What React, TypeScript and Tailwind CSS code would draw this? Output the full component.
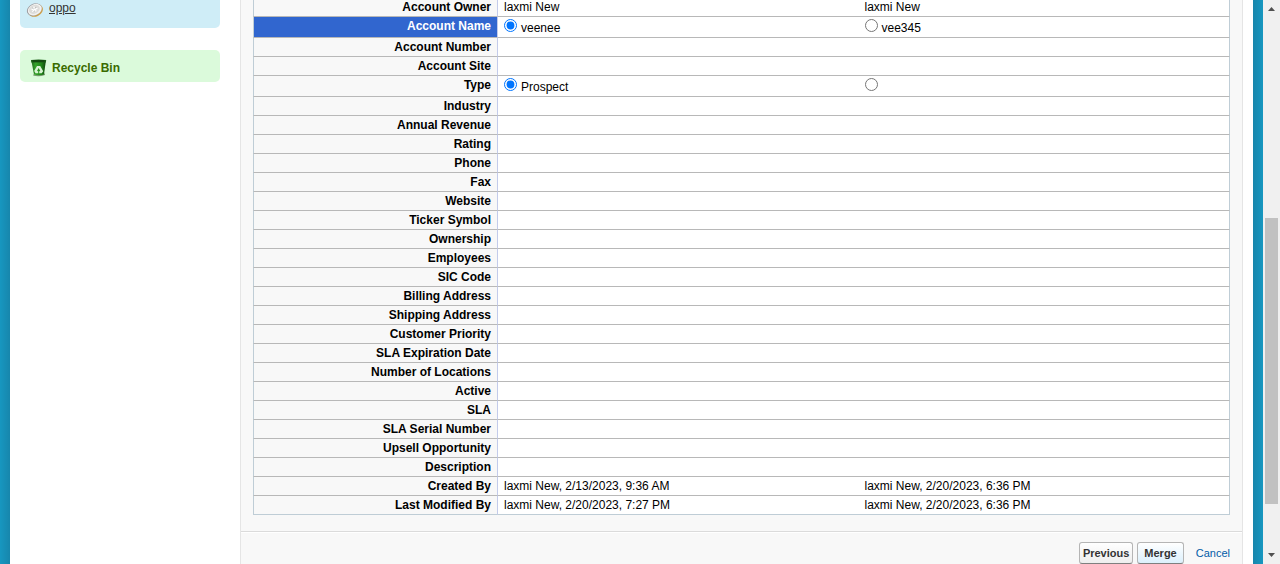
import React from 'react';

type Value = { text: string; choice?: boolean; checked?: boolean };
type Row = { label: string; values: [Value, Value]; active?: boolean };

const blank = (label: string): Row => ({ label, values: [{ text: '' }, { text: '' }] });

const rows: Row[] = [
  { label: 'Account Owner', values: [{ text: 'laxmi New' }, { text: 'laxmi New' }] },
  {
    label: 'Account Name',
    active: true,
    values: [
      { text: 'veenee', choice: true, checked: true },
      { text: 'vee345', choice: true },
    ],
  },
  blank('Account Number'),
  blank('Account Site'),
  {
    label: 'Type',
    values: [
      { text: 'Prospect', choice: true, checked: true },
      { text: '', choice: true },
    ],
  },
  blank('Industry'),
  blank('Annual Revenue'),
  blank('Rating'),
  blank('Phone'),
  blank('Fax'),
  blank('Website'),
  blank('Ticker Symbol'),
  blank('Ownership'),
  blank('Employees'),
  blank('SIC Code'),
  blank('Billing Address'),
  blank('Shipping Address'),
  blank('Customer Priority'),
  blank('SLA Expiration Date'),
  blank('Number of Locations'),
  blank('Active'),
  blank('SLA'),
  blank('SLA Serial Number'),
  blank('Upsell Opportunity'),
  blank('Description'),
  { label: 'Created By', values: [{ text: 'laxmi New, 2/13/2023, 9:36 AM' }, { text: 'laxmi New, 2/20/2023, 6:36 PM' }] },
  { label: 'Last Modified By', values: [{ text: 'laxmi New, 2/20/2023, 7:27 PM' }, { text: 'laxmi New, 2/20/2023, 6:36 PM' }] },
];

function CoinIcon() {
  return (
    <svg width="18" height="16" viewBox="0 0 18 16" aria-hidden="true">
      <ellipse cx="9.4" cy="8.5" rx="7.8" ry="6" transform="rotate(-25 9.4 8.5)" fill="#cf9f4a" />
      <ellipse cx="8.4" cy="7.6" rx="7.8" ry="5.9" transform="rotate(-25 8.4 7.6)" fill="#9b9b9f" />
      <ellipse cx="8.8" cy="7.6" rx="7.2" ry="5.4" transform="rotate(-25 8.8 7.6)" fill="#f3f2f0" />
      <ellipse cx="8.3" cy="7.4" rx="5.8" ry="4.2" transform="rotate(-25 8.3 7.4)" fill="#dddcda" />
      <path d="M8 4.500v3M5.500 7.200l2.500.6 3.500-1.600M8 7.800l-1.500 2M8.500 7.500l1.800 1.700" fill="none" stroke="#fff" strokeWidth="1.3" />
      <path d="M6.500 6l1 .8M9 6.400l1-1.200M8 9.500l.6-.8" fill="none" stroke="#9c9c9c" strokeWidth=".8" />
    </svg>
  );
}

function BinIcon() {
  return (
    <svg width="17" height="18" viewBox="0 0 17 18" aria-hidden="true">
      <defs>
        <linearGradient id="bin-body" x1="0" x2="1" y1="0" y2="0">
          <stop offset="0" stopColor="#1f6b1a" />
          <stop offset=".3" stopColor="#35a32b" />
          <stop offset=".7" stopColor="#1f8418" />
          <stop offset="1" stopColor="#0f420c" />
        </linearGradient>
      </defs>
      <path d="M3 15.500l12-1v1.500q-5 2-11.500.8z" fill="#7a9c73" />
      <path d="M1.300 1.500h14.600l-1.900 14q-4.900 1.300-10 0z" fill="url(#bin-body)" />
      <path d="M1 1q7.600-.8 15.200 0l-.3 2.500H1.400z" fill="#1b5f16" />
      <path d="M2.600 1.500h12v1h-12z" fill="#0c330a" />
      <path d="M7 7h3.200l3 5.200-1.500 2h-2.500v-2l1.100-.3-1.700-3-1.600 3 1.200.3v2H5.600L4.200 12z" fill="#d8f2d3" />
    </svg>
  );
}

function Sidebar() {
  return (
    <aside className="flex w-[230px] shrink-0 flex-col pl-2.5 pr-5">
      <div className="flex h-7 items-start gap-1 rounded-b-[5px] bg-[#cfedf7] pl-1.5 pr-2">
        <span className="pt-0.5"><CoinIcon /></span>
        <a href="#oppo" className="pl-px text-[12px] leading-4 text-[#333] underline">oppo</a>
      </div>
      <a href="#recycle-bin" className="mt-[22px] flex h-8 items-center gap-1 rounded-[5px] bg-[#dbfadb] pl-2.5 pt-1 text-[12px] font-bold text-[#3a6b00]">
        <BinIcon />
        <span className="pl-px">Recycle Bin</span>
      </a>
    </aside>
  );
}

function ValueCell({ row, index }: { row: Row; index: 0 | 1 }) {
  const value = row.values[index];
  const edge = index === 1 ? 'border-r border-r-[#bfcdd6]' : '';
  return (
    <td className={`border-b border-b-[#b8b8b8] bg-white pl-1.5 align-top group-last:border-b-[#bfcdd6] ${edge}`}>
      {value.choice ? (
        <label className="flex h-5 items-start gap-1">
          <input
            type="radio"
            name={row.label}
            defaultChecked={value.checked}
            aria-label={value.text || `No ${row.label}`}
            className="m-0 mt-0.5 size-[13px] shrink-0"
          />
          <span className="pt-0.5 leading-[18px]">{value.text}</span>
        </label>
      ) : (
        <div className="h-[18px] leading-[18px]">{value.text}</div>
      )}
    </td>
  );
}

function MergeTable() {
  return (
    <table className="-mt-0.5 w-full table-fixed border-separate border-spacing-0 text-[12px] leading-[18px] text-black">
      <colgroup>
        <col className="w-[245px]" />
        <col className="w-[36.9%]" />
        <col />
      </colgroup>
      <tbody>
        {rows.map((row) => (
          <tr key={row.label} className="group">
            <th
              scope="row"
              className={`border-x border-b border-b-[#b8b8b8] border-l-[#bfcdd6] border-r-[#c3cbea] pr-1.5 text-right align-top font-bold group-last:border-b-[#bfcdd6] ${
                row.active ? 'bg-[#3166cf] text-white' : 'bg-[#f8f8f8]'
              }`}
            >
              {row.label}
            </th>
            <ValueCell row={row} index={0} />
            <ValueCell row={row} index={1} />
          </tr>
        ))}
      </tbody>
    </table>
  );
}

function Actions() {
  const button = 'h-[22px] rounded-[3px] border border-[#b5b5b5] border-b-[#7f7f7f] text-[11px] font-bold text-[#333]';
  return (
    <div className="mt-4 flex items-center justify-end border-t border-[#dbdbdb] pr-3 pt-2.5 shadow-[inset_0_1px_0_#fff]">
      <button type="button" className={`${button} bg-linear-to-b from-white to-[#eeeeee] px-[3px]`}>Previous</button>
      <button type="button" className={`${button} ml-1 bg-linear-to-b from-white to-[#dcf0fc] px-1.5`}>Merge</button>
      <a href="#cancel" className="ml-3 text-[11px] text-[#015ba7]">Cancel</a>
    </div>
  );
}

function ScrollTrack() {
  return (
    <div className="flex w-[17px] shrink-0 flex-col items-center bg-[#f0f0f0]" aria-hidden="true">
      <svg width="17" height="17" viewBox="0 0 17 17" className="shrink-0">
        <path d="M5 11h7L8.500 7z" fill="#505050" />
      </svg>
      <div className="flex w-[13px] flex-1 flex-col">
        <div className="flex-[201]" />
        <div className="flex-[286] bg-[#c1c1c1]" />
        <div className="flex-[43]" />
      </div>
      <svg width="17" height="17" viewBox="0 0 17 17" className="shrink-0">
        <path d="M5 6h7L8.500 10z" fill="#505050" />
      </svg>
    </div>
  );
}

export default function App() {
  return (
    <div className="flex h-screen overflow-hidden bg-white font-['Liberation_Sans',Arial,sans-serif]">
      <div className="w-2.5 shrink-0 bg-linear-to-r from-[#1797c0] to-[#1786ac]" />
      <Sidebar />
      <main className="mr-2.5 min-w-0 flex-1 border-x border-[#e5e5e5] bg-[#f8f8f8]">
        <div className="px-3">
          <MergeTable />
        </div>
        <Actions />
      </main>
      <div className="w-2.5 shrink-0 bg-linear-to-r from-[#1786ac] to-[#1797c0]" />
      <ScrollTrack />
    </div>
  );
}
